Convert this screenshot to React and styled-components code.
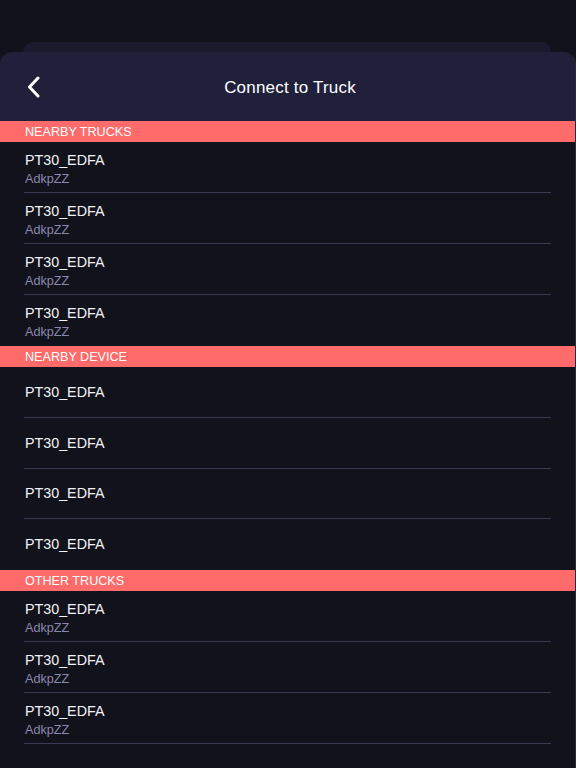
import React from "react";
import styled, { createGlobalStyle } from "styled-components";

const GlobalStyle = createGlobalStyle`
	html, body {
		margin: 0;
		padding: 0;
		background: #12121c;
	}
	body {
		font-family: "Liberation Sans", Arial, sans-serif;
		-webkit-font-smoothing: antialiased;
	}
`;

const sections = [
	{
		title: "NEARBY TRUCKS",
		items: [
			{ name: "PT30_EDFA", sub: "AdkpZZ" },
			{ name: "PT30_EDFA", sub: "AdkpZZ" },
			{ name: "PT30_EDFA", sub: "AdkpZZ" },
			{ name: "PT30_EDFA", sub: "AdkpZZ" }
		]
	},
	{
		title: "NEARBY DEVICE",
		items: [{ name: "PT30_EDFA" }, { name: "PT30_EDFA" }, { name: "PT30_EDFA" }, { name: "PT30_EDFA" }]
	},
	{
		title: "OTHER TRUCKS",
		items: [
			{ name: "PT30_EDFA", sub: "AdkpZZ" },
			{ name: "PT30_EDFA", sub: "AdkpZZ" },
			{ name: "PT30_EDFA", sub: "AdkpZZ" }
		]
	}
];

const App = () => {
	return (
		<>
			<GlobalStyle />
			<Screen>
				<BackCard />
				<Sheet>
					<Header>
						<BackButton type="button" aria-label="Back">
							<svg width="14" height="22" viewBox="0 0 14 22" fill="none">
								<polyline points="12,2 3.5,11 12,20" stroke="#ffffff" strokeWidth="3" strokeLinecap="round" strokeLinejoin="round" />
							</svg>
						</BackButton>
						<Title>Connect to Truck</Title>
					</Header>
					<List>
						{sections.map((s, si) => (
							<section key={si}>
								<SectionHeader>{s.title}</SectionHeader>
								{s.items.map((item, i) => {
									const last = i === s.items.length - 1;
									const divider = !last || si === sections.length - 1;
									return (
										<Row key={i} $centered={!item.sub}>
											<ItemName>{item.name}</ItemName>
											{item.sub && <ItemSub>{item.sub}</ItemSub>}
											<Divider $visible={divider} />
										</Row>
									);
								})}
							</section>
						))}
					</List>
				</Sheet>
			</Screen>
		</>
	);
};

const Screen = styled.div`
	width: 576px;
	height: 768px;
	padding-top: 42px;
	box-sizing: border-box;
	background: #12121c;
	overflow: hidden;
	display: flex;
	flex-direction: column;
`;

const BackCard = styled.div`
	height: 10px;
	margin: 0 25px 0 23px;
	background: #1b1b2d;
	border-radius: 12px 12px 0 0;
`;

const Sheet = styled.div`
	flex: 1;
	display: flex;
	flex-direction: column;
	background: #12121c;
	border-radius: 12px 12px 0 0;
	overflow: hidden;
	border-right: 1px solid #2a2a3a;
`;

const Header = styled.header`
	height: 69px;
	background: #20203b;
	display: flex;
	align-items: center;
	justify-content: center;
	position: relative;
`;

const BackButton = styled.button`
	position: absolute;
	left: 26px;
	top: 24px;
	padding: 0;
	border: none;
	background: transparent;
	display: flex;
`;

const Title = styled.h1`
	margin: 0;
	margin-left: 5px;
	padding-top: 2px;
	color: #ffffff;
	font-size: 17px;
	font-weight: 400;
	letter-spacing: 0.2px;
`;

const List = styled.div`
	display: flex;
	flex-direction: column;
`;

const SectionHeader = styled.div`
	height: 21px;
	background: #ff6a6b;
	color: #ffffff;
	font-size: 12.6px;
	line-height: 22px;
	padding-left: 25px;
`;

const Row = styled.div`
	position: relative;
	height: ${({ $centered }) => ($centered ? "50.75px" : "51px")};
	box-sizing: border-box;
	padding: ${({ $centered }) => ($centered ? "0 25px 1px" : "9px 25px 0")};
	display: flex;
	flex-direction: column;
	justify-content: ${({ $centered }) => ($centered ? "center" : "flex-start")};
`;

const ItemName = styled.div`
	color: #f2f2f6;
	font-size: 14.3px;
	line-height: 18px;
`;

const ItemSub = styled.div`
	margin-top: 1px;
	color: #8a88ad;
	font-size: 12.6px;
	line-height: 18px;
`;

const Divider = styled.div`
	position: absolute;
	left: 24px;
	right: 24px;
	bottom: 0;
	height: 1px;
	background: ${({ $visible }) => ($visible ? "#3b3953" : "transparent")};
`;

export default App;
